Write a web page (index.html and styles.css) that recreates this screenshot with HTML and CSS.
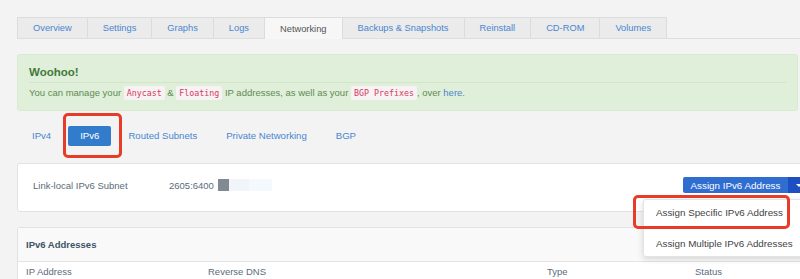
FILE: index.html
```html
<!DOCTYPE html>
<html>
<head>
    <title>Networking</title>
    <link rel="stylesheet" href="styles.css">
</head>
<body>
    <div class="page">
        <ul class="tabs">
            <li><a href="#">Overview</a></li>
            <li><a href="#">Settings</a></li>
            <li><a href="#">Graphs</a></li>
            <li><a href="#">Logs</a></li>
            <li class="active"><a href="#">Networking</a></li>
            <li><a href="#">Backups &amp; Snapshots</a></li>
            <li><a href="#">Reinstall</a></li>
            <li><a href="#">CD-ROM</a></li>
            <li><a href="#">Volumes</a></li>
        </ul>

        <div class="alert">
            <h4>Woohoo!</h4>
            <p>You can manage your <code>Anycast</code> &amp; <code>Floating</code> IP addresses, as well as your <code>BGP Prefixes</code>, over <a href="#">here</a>.</p>
        </div>

        <ul class="pills">
            <li><a href="#">IPv4</a></li>
            <li class="active"><a href="#">IPv6</a></li>
            <li><a href="#">Routed Subnets</a></li>
            <li><a href="#">Private Networking</a></li>
            <li><a href="#">BGP</a></li>
            <span class="mark mark-pill"></span>
        </ul>

        <div class="panel subnet">
            <span class="label">Link-local IPv6 Subnet</span>
            <span class="value">2605:6400 <span class="blur dark"></span><span class="blur light"></span><span class="blur lighter"></span></span>
            <div class="btn-group">
                <button class="btn" type="button">Assign IPv6 Address</button>
                <button class="btn caret-btn" type="button"><span class="caret"></span></button>
                <ul class="dropdown">
                    <li><a href="#">Assign Specific IPv6 Address</a></li>
                    <li><a href="#">Assign Multiple IPv6 Addresses</a></li>
                    <span class="mark mark-item"></span>
                </ul>
            </div>
        </div>

        <div class="panel addresses">
            <div class="panel-heading">IPv6 Addresses</div>
            <div class="cols">
                <span class="c-ip">IP Address</span>
                <span class="c-dns">Reverse DNS</span>
                <span class="c-type">Type</span>
                <span class="c-status">Status</span>
            </div>
        </div>
    </div>
</body>
</html>
```

FILE: styles.css
```css
html, body {
    margin: 0;
    overflow: hidden;
}

body {
    font-family: "Liberation Sans", Arial, sans-serif;
    font-size: 9.5px;
    background-color: #f3f3f3;
    color: #555;
}

a {
    text-decoration: none;
    color: #4a86d0;
}

ul {
    list-style: none;
    margin: 0;
    padding: 0;
}

.page {
    padding: 17px 0 0 17px;
    width: 783px;
}

/* top tabs */
.tabs {
    display: flex;
    height: 21px;
    border-bottom: 1px solid #dedede;
    margin-right: -20px;
    font-size: 9.3px;
}

.tabs li {
    background-color: #ebebeb;
    border: 1px solid #dcdcdc;
    border-bottom: 0;
    border-left: 0;
    display: flex;
    align-items: center;
    padding: 0 15px;
}

.tabs li:first-child {
    border-left: 1px solid #dcdcdc;
}

.tabs li.active {
    background-color: #f7f7f7;
    margin-bottom: -1px;
}

.tabs li.active a {
    color: #555;
}

/* alert */
.alert {
    margin-top: 15px;
    width: 757px;
    padding: 10px 11px 10px;
    background-color: #e0efd9;
    border: 1px solid #d9ead0;
    border-radius: 3px;
    color: #5f8a55;
}

.alert h4 {
    margin: 0;
    font-size: 11.5px;
    line-height: 14px;
    color: #3f7a3a;
    padding-bottom: 3px;
    border-bottom: 1px solid #d3e5c8;
}

.alert p {
    margin: 3px 0 0;
    line-height: 14px;
}

.alert code {
    font-family: "DejaVu Sans Mono", "Liberation Mono", monospace;
    font-size: 8.3px;
    color: #d63a62;
    background-color: #f7f2f3;
    padding: 2px 3px;
    border-radius: 2px;
}

/* pills */
.pills {
    position: relative;
    display: flex;
    gap: 5px;
    margin: 15px 0 0 3px;
    font-size: 9.6px;
}

.pills li a {
    display: block;
    height: 20px;
    line-height: 20px;
    padding: 0 12px;
    border-radius: 2px;
}

.pills li.active a {
    background-color: #337ccc;
    color: #fff;
}

.mark {
    position: absolute;
    border: 3px solid #e63c28;
    border-radius: 5px;
    box-sizing: border-box;
}

.mark-pill {
    left: 43px;
    top: -13px;
    width: 59px;
    height: 45px;
}

/* panels */
.panel {
    background-color: #fff;
    border: 1px solid #e2e2e2;
    border-radius: 3px;
    margin-right: -12px;
}

.subnet {
    margin-top: 17px;
    padding: 13px 0 18px 15px;
    display: flex;
    align-items: center;
    height: 16px;
}

.subnet .label {
    width: 136px;
    color: #5b6b7a;
}

.subnet .value {
    color: #5b6b7a;
    display: flex;
    align-items: center;
}

.blur {
    display: inline-block;
    height: 12px;
}

.blur.dark {
    width: 11px;
    margin-left: 4px;
    background-color: #7f8a93;
}

.blur.light {
    width: 20px;
    background-color: #f1f5f9;
}

.blur.lighter {
    width: 23px;
    background-color: #f3f9fd;
}

.btn-group {
    position: relative;
    display: flex;
    margin-left: auto;
    margin-right: 1px;
}

.btn {
    font-family: "Liberation Sans", Arial, sans-serif;
    font-size: 9.8px;
    height: 16px;
    width: 105px;
    border: 0;
    padding: 0;
    color: #fff;
    background-color: #2f6dd0;
    border-radius: 2px 0 0 2px;
}

.caret-btn {
    background-color: #1d4fc3;
    border-radius: 0 2px 2px 0;
    width: 22px;
}

.caret {
    display: block;
    width: 0;
    height: 0;
    margin: 0 auto;
    border-left: 3px solid transparent;
    border-right: 3px solid transparent;
    border-top: 3px solid #fff;
}

.dropdown {
    position: absolute;
    left: -40px;
    top: calc(100% + 6px);
    width: 172px;
    background-color: #fff;
    border: 1px solid #e4e4e4;
    border-radius: 3px;
    box-shadow: 0 2px 6px rgba(0, 0, 0, 0.15);
    font-size: 9.8px;
}

.dropdown li a {
    display: block;
    padding: 0 12px;
    line-height: 25px;
    color: #444;
}

.dropdown li + li {
    margin-top: 6px;
}

.mark-item {
    left: -11px;
    top: -5px;
    width: 157px;
    height: 34px;
}

.addresses {
    margin-top: 15px;
}

.panel-heading {
    height: 33px;
    line-height: 33px;
    padding-left: 8px;
    font-weight: bold;
    font-size: 9.5px;
    color: #3e5265;
    background-color: #f9f9f9;
    border-bottom: 1px solid #e4e4e4;
}

.cols {
    display: grid;
    grid-template-columns: 182px 339px 148px 1fr;
    padding-left: 8px;
    height: 24px;
    line-height: 20px;
    color: #5b6b7a;
}
```
